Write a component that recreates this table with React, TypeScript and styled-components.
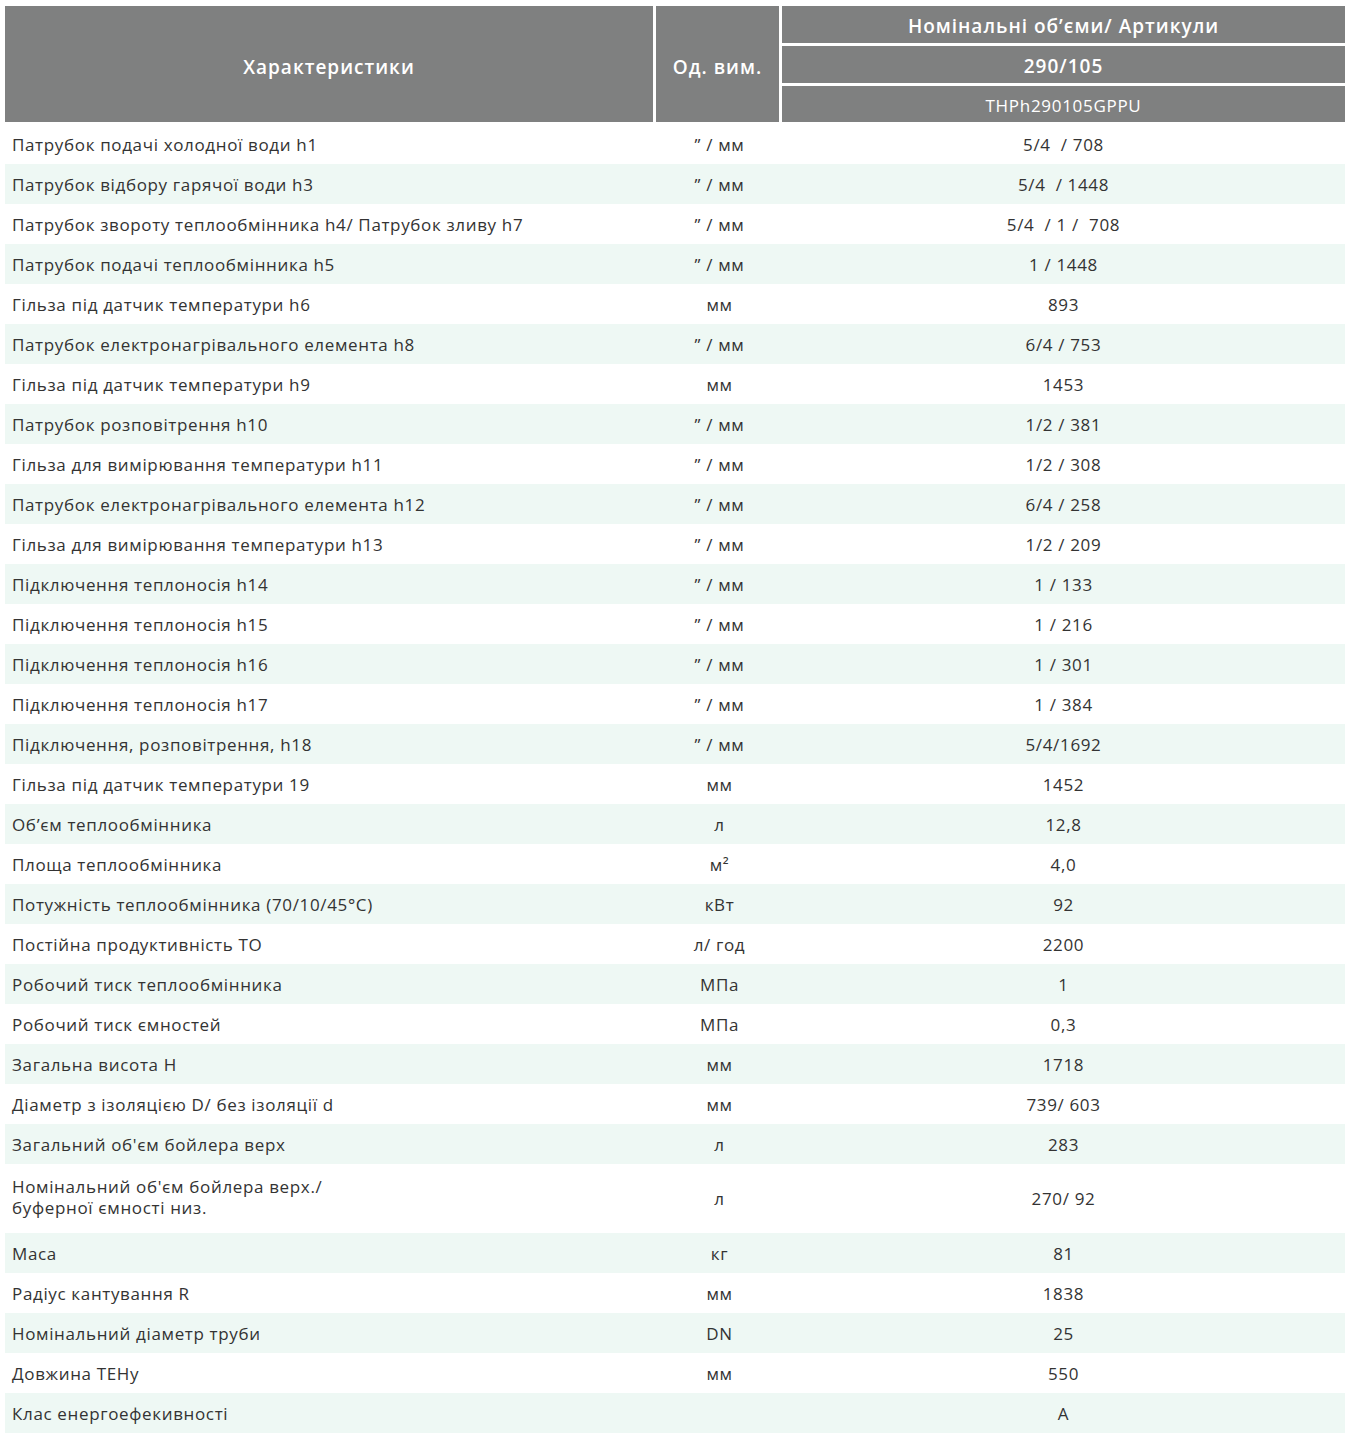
import React from "react";
import styled, { createGlobalStyle } from "styled-components";

const GlobalStyle = createGlobalStyle`
  html, body {
    margin: 0;
    padding: 0;
    background: #ffffff;
  }
  body {
    font-family: "Open Sans", "Noto Sans", sans-serif;
    color: #333333;
  }
`;

const COLUMNS = "648px 123px 563px";

const Page = styled.div`
  width: 1350px;
  padding: 6px 0 0 5px;
  box-sizing: border-box;
`;

const Head = styled.div`
  display: grid;
  grid-template-columns: ${COLUMNS};
  grid-template-rows: 37px 37px 36px;
  gap: 3px;
  margin-bottom: 2px;
`;

const HeadCell = styled.div<{ span?: number; light?: boolean }>`
  background: #7f8080;
  color: #ffffff;
  display: flex;
  align-items: center;
  justify-content: center;
  padding-top: ${(p) => (p.span ? "6px" : "3px")};
  box-sizing: border-box;
  grid-row: ${(p) => (p.span ? `span ${p.span}` : "auto")};
  font-size: ${(p) => (p.light ? "17px" : "19px")};
  font-weight: ${(p) => (p.light ? 400 : 600)};
  letter-spacing: ${(p) => (p.light ? "0.7px" : "1px")};
`;

const Body = styled.div`
  display: flex;
  flex-direction: column;
  width: 1340px;
`;

const Row = styled.div<{ striped: boolean; tall?: boolean }>`
  display: grid;
  grid-template-columns: ${COLUMNS};
  column-gap: 3px;
  align-items: center;
  height: ${(p) => (p.tall ? "69px" : "40px")};
  background: ${(p) => (p.striped ? "#eef8f4" : "#ffffff")};
  font-size: 17px;
  letter-spacing: 0.65px;
`;

const Label = styled.div<{ tall?: boolean }>`
  padding-left: 7px;
  padding-bottom: ${(p) => (p.tall ? "4px" : "0")};
  line-height: 21px;
`;

const Centered = styled.div<{ shift?: number }>`
  text-align: center;
  white-space: pre;
  padding-left: ${(p) => p.shift ?? 0}px;
`;

type Spec = [string, string, string];

const specs: Spec[] = [
  ["Патрубок подачі холодної води h1", "” / мм", "5/4  / 708"],
  ["Патрубок відбору гарячої води h3", "” / мм", "5/4  / 1448"],
  ["Патрубок звороту теплообмінника h4/ Патрубок зливу h7", "” / мм", "5/4  / 1 /  708"],
  ["Патрубок подачі теплообмінника h5", "” / мм", "1 / 1448"],
  ["Гільза під датчик температури h6", "мм", "893"],
  ["Патрубок електронагрівального елемента h8", "” / мм", "6/4 / 753"],
  ["Гільза під датчик температури h9", "мм", "1453"],
  ["Патрубок розповітрення h10", "” / мм", "1/2 / 381"],
  ["Гільза для вимірювання температури h11", "” / мм", "1/2 / 308"],
  ["Патрубок електронагрівального елемента h12", "” / мм", "6/4 / 258"],
  ["Гільза для вимірювання температури h13", "” / мм", "1/2 / 209"],
  ["Підключення теплоносія h14", "” / мм", "1 / 133"],
  ["Підключення теплоносія h15", "” / мм", "1 / 216"],
  ["Підключення теплоносія h16", "” / мм", "1 / 301"],
  ["Підключення теплоносія h17", "” / мм", "1 / 384"],
  ["Підключення, розповітрення, h18", "” / мм", "5/4/1692"],
  ["Гільза під датчик температури 19", "мм", "1452"],
  ["Об’єм теплообмінника", "л", "12,8"],
  ["Площа теплообмінника", "м²", "4,0"],
  ["Потужність теплообмінника (70/10/45°C)", "кВт", "92"],
  ["Постійна продуктивність ТО", "л/ год", "2200"],
  ["Робочий тиск теплообмінника", "МПа", "1"],
  ["Робочий тиск ємностей", "МПа", "0,3"],
  ["Загальна висота H", "мм", "1718"],
  ["Діаметр з ізоляцією D/ без ізоляції d", "мм", "739/ 603"],
  ["Загальний об'єм бойлера верх", "л", "283"],
  ["Номінальний об'єм бойлера верх./\nбуферної ємності низ.", "л", "270/ 92"],
  ["Маса", "кг", "81"],
  ["Радіус кантування R", "мм", "1838"],
  ["Номінальний діаметр труби", "DN", "25"],
  ["Довжина ТЕНу", "мм", "550"],
  ["Клас енергоефекивності", "", "A"],
];

export default function App() {
  return (
    <>
      <GlobalStyle />
      <Page>
        <Head>
          <HeadCell span={3}>Характеристики</HeadCell>
          <HeadCell span={3}>Од. вим.</HeadCell>
          <HeadCell>Номінальні об’єми/ Артикули</HeadCell>
          <HeadCell>290/105</HeadCell>
          <HeadCell light>THPh290105GPPU</HeadCell>
        </Head>
        <Body>
          {specs.map(([label, unit, value], i) => {
            const lines = label.split("\n");
            const tall = lines.length > 1;
            return (
              <Row key={label} striped={i % 2 === 1} tall={tall}>
                <Label tall={tall}>
                  {lines.map((l, j) => (
                    <div key={j}>{l}</div>
                  ))}
                </Label>
                <Centered shift={4}>{unit}</Centered>
                <Centered>{value}</Centered>
              </Row>
            );
          })}
        </Body>
      </Page>
    </>
  );
}
